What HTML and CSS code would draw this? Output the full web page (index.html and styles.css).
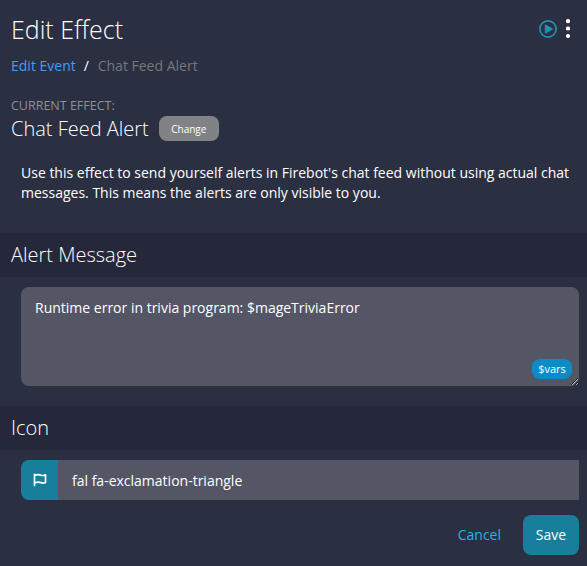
FILE: index.html
```html
<!DOCTYPE html>
<html lang="en">
<head>
<meta charset="utf-8">
<title>Edit Effect</title>
<link rel="stylesheet" href="styles.css">
</head>
<body>
<main class="modal">
  <header class="header">
    <h1 class="title">Edit Effect</h1>
    <div class="actions">
      <svg class="play" viewBox="0 0 18 18" width="18" height="18"><circle cx="9" cy="9" r="8.1" fill="none" stroke="currentColor" stroke-width="1.7"/><path d="M6.3 4.8v8.4L13.600 9z" fill="currentColor" stroke="currentColor" stroke-width="1" stroke-linejoin="round"/></svg>
      <svg class="dots" viewBox="0 0 4 20" width="4" height="20"><circle cx="2" cy="2.2" r="2.1"/><circle cx="2" cy="9.500" r="2.1"/><circle cx="2" cy="17" r="2.1"/></svg>
    </div>
  </header>
  <nav class="crumbs"><a class="link">Edit Event</a><span class="slash">/</span><span class="here">Chat Feed Alert</span></nav>
  <section class="current">
    <div class="label">CURRENT EFFECT:</div>
    <div class="effect"><span class="effect-name">Chat Feed Alert</span><button class="change">Change</button></div>
  </section>
  <p class="description">Use this effect to send yourself alerts in Firebot's chat feed without using actual chat messages. This means the alerts are only visible to you.</p>
  <h2 class="section-title">Alert Message</h2>
  <div class="message">
    <textarea class="textarea" spellcheck="false">Runtime error in trivia program: $mageTriviaError</textarea>
    <span class="vars">$vars</span>
  </div>
  <h2 class="section-title">Icon</h2>
  <div class="icon-row">
    <span class="flag"><svg viewBox="0 0 14 14" width="14" height="14" fill="none" stroke="currentColor" stroke-width="1.7" stroke-linecap="round" stroke-linejoin="round"><path d="M1.500 1.300V12.500M1.500 2.500C5 .9 6.400 1.500 8 2.200c1.600.600 3 .3 4.500-.3v7.500c-1.600.9-3 .8-4.600.2C6 8.900 4.400 8.900 1.500 10"/></svg></span>
    <span class="icon-value">fal fa-exclamation-triangle</span>
  </div>
  <footer class="footer"><button class="cancel">Cancel</button><button class="save">Save</button></footer>
</main>
</body>
</html>
```
FILE: styles.css
```css
* { box-sizing: border-box; }
body {
  margin: 0;
  height: 566px;
  overflow: hidden;
  background: #2b2f42;
  color: #fff;
  font: 14px/20px "Open Sans", sans-serif;
}
button { border: 0; color: #fff; font-family: inherit; }
.header {
  display: flex;
  justify-content: space-between;
  height: 56px;
  padding: 12px 17px 0 11px;
}
.title { margin: 0; font-size: 25px; line-height: 35px; font-weight: 300; }
.actions { display: flex; gap: 9px; padding-top: 7px; }
.play { margin-top: 1px; color: #2093b3; }
.dots { fill: #fff; }
.crumbs { display: flex; height: 40px; padding-left: 11px; }
.link { color: #3e9ff0; }
.slash { width: 22px; padding-left: 8px; }
.here { color: #777; }
.current { height: 67px; padding-left: 11px; }
.label { font-size: 12.5px; line-height: 20px; color: #8d8f99; }
.effect { display: flex; align-items: center; height: 25px; gap: 10px; }
.effect-name { font-size: 20px; line-height: 25px; font-weight: 300; }
.change {
  width: 60px;
  height: 25px;
  padding: 1px 0 0;
  border-radius: 8px;
  background: #818285;
  font-size: 10px;
}
.description { height: 70px; margin: 0; padding: 0 10px 0 21px; }
.section-title {
  height: 44px;
  margin: 0;
  padding-left: 11px;
  background: #25283a;
  font-size: 20px;
  line-height: 43px;
  font-weight: 300;
}
.message { position: relative; height: 129px; padding: 10px 8px 0 21px; }
.textarea {
  display: block;
  width: 558px;
  height: 99px;
  padding: 11px 14px;
  border: 0;
  border-radius: 8px;
  outline: 0;
  background: #545666;
  color: #fff;
  font: inherit;
  resize: vertical;
}
.vars {
  position: absolute;
  right: 15px;
  bottom: 27px;
  width: 40px;
  height: 20px;
  border-radius: 8px;
  background: #0c8cc7;
  font-size: 11px;
  line-height: 20px;
  text-align: center;
}
.icon-row { display: flex; height: 50px; padding: 10px 8px 0 21px; }
.flag {
  display: flex;
  align-items: center;
  justify-content: center;
  width: 37px;
  border-radius: 8px 0 0 8px;
  background: #177f9b;
}
.icon-value { flex: 1; padding-left: 14px; background: #545666; line-height: 41px; }
.footer { display: flex; justify-content: flex-end; padding: 15px 8px 0 0; }
.cancel, .save { height: 40px; padding: 0 0 2px; border-radius: 8px; font-size: 14px; }
.cancel { margin-right: 22px; background: none; color: #18b9e5; }
.save { width: 56px; background: #177f9b; }
```
